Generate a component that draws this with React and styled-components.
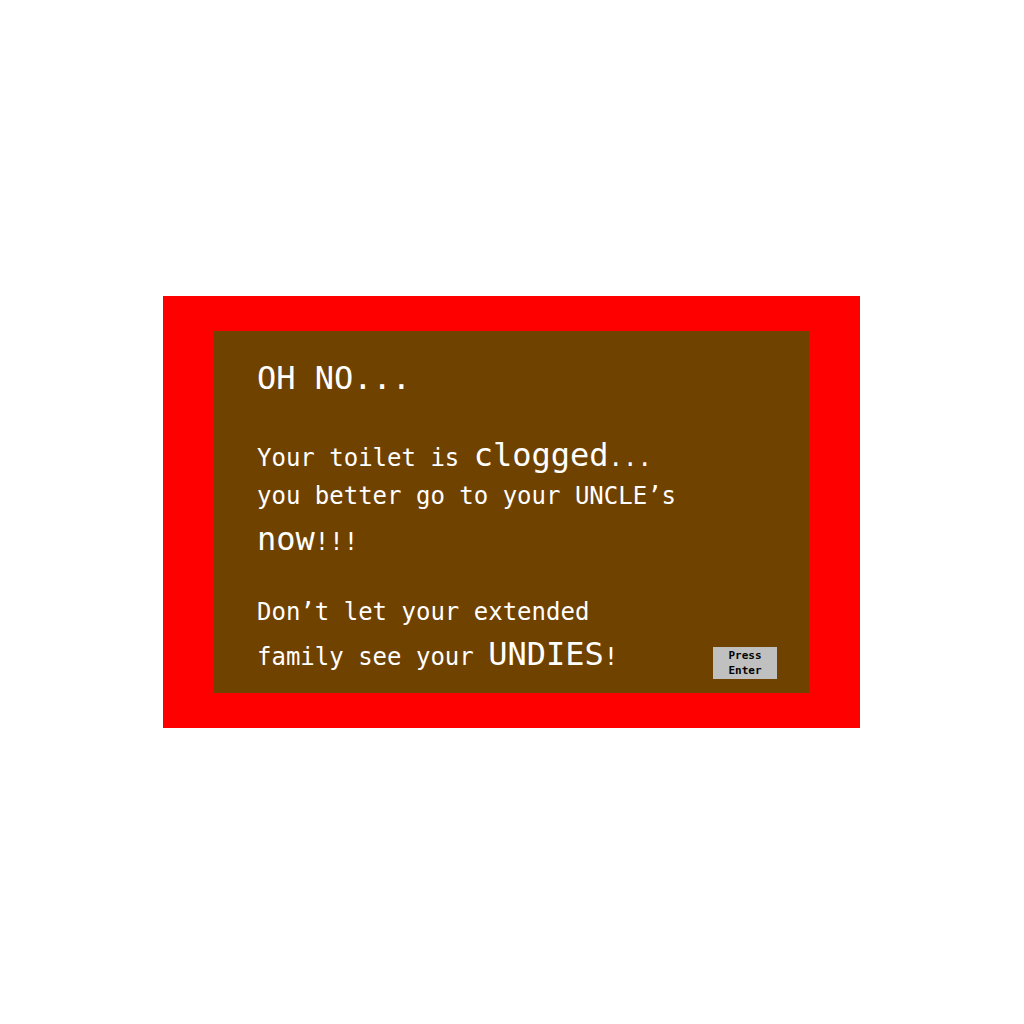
import React from 'react';
import styled, { createGlobalStyle } from 'styled-components';

const GlobalStyle = createGlobalStyle`
  html, body {
    margin: 0;
    padding: 0;
    background: #ffffff;
  }
  #root {
    min-height: 100vh;
    display: flex;
    align-items: center;
    justify-content: center;
  }
`;

const Frame = styled.div`
  width: 697px;
  box-sizing: border-box;
  margin-right: 1px;
  padding: 35px 51px;
  background: #ff0000;
`;

const Dialog = styled.div`
  background: #6f4200;
  color: #ffffff;
  font-family: "DejaVu Sans Mono", "Liberation Mono", monospace;
  font-size: 24px;
  padding: 27px 32px 10px 43px;
`;

const Heading = styled.h1`
  margin: 0 0 40.7px;
  font-size: 32px;
  font-weight: normal;
  line-height: 40px;
`;

const Line = styled.div`
  line-height: ${({ h }) => h || 38}px;
  margin-top: ${({ gap }) => gap || 0}px;
  white-space: pre;
`;

const Big = styled.span`
  font-size: 32px;
  line-height: 0;
`;

const LastRow = styled.div`
  display: flex;
  justify-content: space-between;
  align-items: flex-end;
`;

const EnterButton = styled.button`
  width: 64px;
  height: 32px;
  margin-bottom: 4px;
  padding: 0;
  border: none;
  background: #c0c0c0;
  color: #000000;
  font-family: "DejaVu Sans Mono", "Liberation Mono", monospace;
  font-size: 11px;
  font-weight: bold;
  line-height: 15px;
  text-align: center;
`;

function App() {
  return (
    <>
      <GlobalStyle />
      <Frame>
        <Dialog>
          <Heading>OH NO...</Heading>
          <Line>Your toilet is <Big>clogged</Big>...</Line>
          <Line>you better go to your UNCLE’s</Line>
          <Line h={54}><Big>now</Big>!!!</Line>
          <Line gap={24}>Don’t let your extended</Line>
          <LastRow>
            <Line h={52}>family see your <Big>UNDIES</Big>!</Line>
            <EnterButton>Press<br />Enter</EnterButton>
          </LastRow>
        </Dialog>
      </Frame>
    </>
  );
}

export default App;
